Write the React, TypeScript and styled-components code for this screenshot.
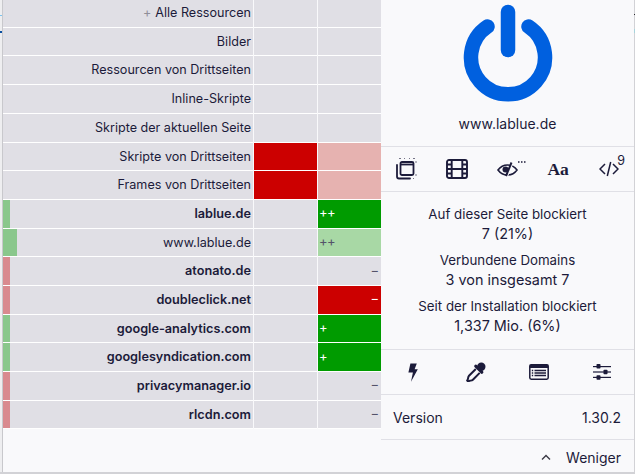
import React from 'react';
import styled, { createGlobalStyle } from 'styled-components';

const GlobalStyle = createGlobalStyle`
  html, body {
    margin: 0;
    padding: 0;
    background: #f9f9fb;
  }
  body {
    font-family: Inter, "Noto Sans", sans-serif;
    color: #1c1b3a;
  }
`;

type CellTone = 'none' | 'red' | 'paleRed' | 'green' | 'paleGreen';

interface IFirewallRow {
  label: string;
  bold?: boolean;
  prefix?: string;
  bar?: 'green' | 'red';
  barWidth?: number;
  global?: CellTone;
  local?: CellTone;
  mark?: string;
}

const rows: IFirewallRow[] = [
  { label: 'Alle Ressourcen', prefix: '+' },
  { label: 'Bilder' },
  { label: 'Ressourcen von Drittseiten' },
  { label: 'Inline-Skripte' },
  { label: 'Skripte der aktuellen Seite' },
  { label: 'Skripte von Drittseiten', global: 'red', local: 'paleRed' },
  { label: 'Frames von Drittseiten', global: 'red', local: 'paleRed' },
  { label: 'lablue.de', bold: true, bar: 'green', barWidth: 7, local: 'green', mark: '++' },
  { label: 'www.lablue.de', bar: 'green', barWidth: 14, local: 'paleGreen', mark: '++' },
  { label: 'atonato.de', bold: true, bar: 'red', barWidth: 7, mark: '−' },
  { label: 'doubleclick.net', bold: true, bar: 'red', barWidth: 7, local: 'red', mark: '−' },
  { label: 'google-analytics.com', bold: true, bar: 'green', barWidth: 7, local: 'green', mark: '+' },
  { label: 'googlesyndication.com', bold: true, bar: 'green', barWidth: 7, local: 'green', mark: '+' },
  { label: 'privacymanager.io', bold: true, bar: 'red', barWidth: 7, mark: '−' },
  { label: 'rlcdn.com', bold: true, bar: 'red', barWidth: 7, mark: '−' },
];

const toneColors: Record<CellTone, string> = {
  none: '#e0dfe5',
  red: '#cc0000',
  paleRed: '#e6b2b0',
  green: '#009b00',
  paleGreen: '#a8d8a5',
};

const barColors = { green: '#8ac78c', red: '#d98a8f' };

const PopupIcon = () => (
  <svg width="22" height="22" viewBox="0 0 22 22" fill="none" stroke="currentColor">
    <path d="M2 7v11.500a2 2 0 0 0 2 2h11" strokeWidth="1.800" strokeLinecap="round" />
    <rect x="5.500" y="4" width="13" height="13" rx="1.500" strokeWidth="1.800" />
    <path d="M5.500 6.500h13" strokeWidth="1.800" />
    <path d="M4 .5h2M9 .5h1M14 .5h1M18 .5h2M21 3v2M21 16v2M18 20.500h1" strokeWidth="1" opacity=".6" />
  </svg>
);

const FilmIcon = () => (
  <svg width="22" height="20" viewBox="0 0 22 20" fill="none" stroke="currentColor" strokeWidth="1.900">
    <rect x="1" y="1" width="20" height="18" rx="2" />
    <path d="M5.700 1v18M16.300 1v18M5.700 10h10.600M1 5.500h4.700M1 10h4.700M1 14.500h4.700M16.300 5.500H21M16.300 10H21M16.300 14.500H21" />
  </svg>
);

const EyeIcon = () => (
  <EyeSvg width="21" height="16" viewBox="0 0 21 16" fill="none" stroke="currentColor">
    <path d="M1 9c2.500-3.400 5.600-5 9.500-5s7 1.600 9.500 5c-2.500 3.400-5.600 5-9.500 5S3.500 12.400 1 9z" strokeWidth="1.600" />
    <circle cx="8.500" cy="8.500" r="3" fill="currentColor" stroke="none" />
    <path d="M16 1.500L10.500 15" stroke="#f9f9fb" strokeWidth="1.300" />
    <path d="M14.500 1.500L9 15" strokeWidth="2" />
    <path d="M21 1h1.500M24 1h1.500M27 1h1.500" strokeWidth="1.500" />
  </EyeSvg>
);

const BoltIcon = () => (
  <svg width="10" height="19" viewBox="0 0 10 19" fill="currentColor">
    <path d="M2.400 .5h6.400L6.600 6.200h3.200L3 18.700l1.900-9.300H.4z" />
  </svg>
);

const DropperIcon = () => (
  <svg width="20" height="20" viewBox="0 0 20 20" fill="none" stroke="currentColor">
    <circle cx="15.300" cy="4.700" r="4.200" fill="currentColor" stroke="none" />
    <path d="M9.800 4.200l6 6" strokeWidth="3.200" strokeLinecap="round" />
    <path d="M9.800 7L3 13.800c-.8.800-.8 1.700-1 3l-.8 1.800.9.900 1.800-.8c1.300-.2 2.200-.2 3-1l6.800-6.800" strokeWidth="2" />
  </svg>
);

const ListIcon = () => (
  <svg width="20" height="16" viewBox="0 0 20 16" fill="none">
    <rect x=".8" y=".8" width="18.400" height="14.400" rx="1.400" stroke="currentColor" strokeWidth="1.500" />
    <rect x=".8" y=".8" width="18.400" height="3.200" fill="currentColor" />
    <path d="M2.800 6.500h1.400M2.800 9h1.400M2.800 11.500h1.400M5.500 6.500h11.500M5.500 9h11.500M5.500 11.500h11.500" stroke="currentColor" strokeWidth="1.300" />
  </svg>
);

const SlidersIcon = () => (
  <svg width="18" height="16" viewBox="0 0 18 16" fill="currentColor">
    <rect x="0" y="2" width="18" height="1.200" />
    <rect x="0" y="7.400" width="18" height="1.200" />
    <rect x="0" y="12.800" width="18" height="1.200" />
    <rect x="3.500" y="0" width="4" height="4.500" rx=".8" />
    <rect x="10.500" y="5.700" width="4" height="4.500" rx=".8" />
    <rect x="3.500" y="11.300" width="4" height="4.500" rx=".8" />
  </svg>
);

const CodeIcon = () => (
  <svg width="20" height="16" viewBox="0 0 20 16" fill="none" stroke="currentColor" strokeWidth="1.500">
    <path d="M6 3L1 8l5 5M14 3l5 5-5 5M11.700 1L8.300 15" />
  </svg>
);

const App: React.FC = () => (
  <>
    <GlobalStyle />
    <Window>
      <LeftEdge />
      <Firewall>
        {rows.map(row => (
          <Row key={row.label}>
            <LabelCell $bold={row.bold}>
              {row.bar && <HitBar $color={barColors[row.bar]} $width={row.barWidth ?? 7} />}
              {row.prefix && <Prefix>{row.prefix}</Prefix>}
              {row.label}
            </LabelCell>
            <RuleCell $tone={row.global ?? 'none'} />
            <RuleCell $tone={row.local ?? 'none'}>
              {row.mark && (
                <CellMark $tone={row.local ?? 'none'} $minus={row.mark === '−'}>
                  {row.mark}
                </CellMark>
              )}
            </RuleCell>
          </Row>
        ))}
      </Firewall>
      <Panel>
        <PowerButton>
          <svg width="100" height="104" viewBox="0 0 100 104" fill="none" stroke="#0060df" strokeWidth="14.500" strokeLinecap="round">
            <path d="M29.500 26.500a37 37 0 1 0 41 0" />
            <path d="M50 12v38" />
          </svg>
        </PowerButton>
        <Hostname>www.lablue.de</Hostname>
        <ToolRow $columns={5}>
          <ToolCell><PopupIcon /></ToolCell>
          <ToolCell><FilmIcon /></ToolCell>
          <ToolCell><EyeIcon /></ToolCell>
          <ToolCell><FontGlyph>Aa</FontGlyph></ToolCell>
          <ToolCell><CodeIcon /><Badge>9</Badge></ToolCell>
        </ToolRow>
        <Stats>
          <StatLabel>Auf dieser Seite blockiert</StatLabel>
          <StatValue>7 (21%)</StatValue>
          <StatLabel>Verbundene Domains</StatLabel>
          <StatValue>3 von insgesamt 7</StatValue>
          <StatLabel>Seit der Installation blockiert</StatLabel>
          <StatValue>1,337 Mio. (6%)</StatValue>
        </Stats>
        <ToolRow $columns={4}>
          <ToolCell><BoltIcon /></ToolCell>
          <ToolCell><DropperIcon /></ToolCell>
          <ToolCell><ListIcon /></ToolCell>
          <ToolCell><SlidersIcon /></ToolCell>
        </ToolRow>
        <VersionRow>
          <span>Version</span>
          <span>1.30.2</span>
        </VersionRow>
        <MoreRow>
          <svg width="10" height="6" viewBox="0 0 10 6" fill="none" stroke="#3a3944" strokeWidth="1.400">
            <path d="M1 5.500l4-4 4 4" />
          </svg>
          <span>Weniger</span>
        </MoreRow>
      </Panel>
      <RightEdge />
    </Window>
  </>
);

export default App;

const Window = styled.div`
  width: 635px;
  height: 474px;
  box-sizing: border-box;
  display: flex;
  overflow: hidden;
  background: #f9f9fb;
  border-bottom: 2px solid #d2d2d6;
`;

const LeftEdge = styled.div`
  width: 3px;
  box-sizing: border-box;
  flex: none;
  border-right: 1px solid #c8c8cc;
  background: linear-gradient(
    #eeeef0 15px,
    #7cc4ef 15px,
    #7cc4ef 16px,
    #eeeef0 16px,
    #eeeef0 31px,
    #0a4ea0 31px,
    #0a4ea0 33px,
    #eeeef0 33px
  );
`;

const RightEdge = styled.div`
  width: 1px;
  flex: none;
  background: linear-gradient(
    #d2d2d6 14px,
    #2a2a2e 14px,
    #2a2a2e 15px,
    #d2d2d6 15px,
    #d2d2d6 29px,
    #a8d4dc 29px,
    #a8d4dc 33px,
    #d2d2d6 33px
  );
`;

const Firewall = styled.div`
  width: 378px;
  flex: none;
  display: flex;
  flex-direction: column;
  margin-top: -0.900px;
`;

const Row = styled.div`
  display: flex;
  height: 28.700px;
  flex: none;
`;

const LabelCell = styled.div<{ $bold?: boolean }>`
  position: relative;
  width: 250px;
  flex: none;
  box-sizing: border-box;
  padding-right: 2px;
  background: #e0dfe5;
  border-bottom: 1px solid #fff;
  font-size: ${({ $bold }) => ($bold ? '12.700px' : '12.600px')};
  font-weight: ${({ $bold }) => ($bold ? 600 : 400)};
  line-height: 27px;
  text-align: right;
  white-space: nowrap;
`;

const HitBar = styled.span<{ $color: string; $width: number }>`
  position: absolute;
  left: 0;
  top: 0;
  bottom: 0;
  width: ${({ $width }) => $width}px;
  background: ${({ $color }) => $color};
`;

const Prefix = styled.span`
  margin-right: 4px;
  color: #8f8e98;
`;

const RuleCell = styled.div<{ $tone: CellTone }>`
  flex: 1;
  display: flex;
  align-items: center;
  box-sizing: border-box;
  margin-left: 1px;
  background: ${({ $tone }) => toneColors[$tone]};
  border-bottom: 1px solid #fff;
`;

const CellMark = styled.span<{ $tone: CellTone; $minus: boolean }>`
  flex: 1;
  padding: 0 ${({ $minus }) => ($minus ? '2px' : '1px')} 3px 1px;
  font-size: 13px;
  letter-spacing: ${({ $minus }) => ($minus ? '0' : '-0.600px')};
  text-align: ${({ $minus }) => ($minus ? 'right' : 'left')};
  color: ${({ $tone }) => ($tone === 'red' || $tone === 'green' ? '#fff' : '#54536a')};
`;

const Panel = styled.div`
  flex: 1;
  display: flex;
  flex-direction: column;
  min-width: 0;
  font-size: 13px;
`;

const PowerButton = styled.div`
  height: 104px;
  display: flex;
  justify-content: center;
`;

const Hostname = styled.div`
  height: 42px;
  line-height: 40px;
  font-size: 14px;
  font-weight: 400;
  text-align: center;
`;

const ToolRow = styled.div<{ $columns: number }>`
  height: 45px;
  box-sizing: border-box;
  display: grid;
  grid-template-columns: repeat(${({ $columns }) => $columns}, 1fr);
  border-top: 1px solid #e0e0e6;
`;

const ToolCell = styled.div`
  position: relative;
  display: flex;
  align-items: center;
  justify-content: center;
`;

const EyeSvg = styled.svg`
  overflow: visible;
`;

const FontGlyph = styled.span`
  font-family: "Liberation Serif", serif;
  font-size: 17.500px;
  font-weight: 700;
`;

const Badge = styled.span`
  position: absolute;
  top: 8px;
  right: 9px;
  font-size: 12.500px;
  line-height: 12px;
`;

const Stats = styled.div`
  height: 158px;
  box-sizing: border-box;
  padding-top: 13px;
  border-top: 1px solid #e0e0e6;
  text-align: center;
`;

const StatLabel = styled.div`
  height: 19px;
  line-height: 19px;
  font-size: 13.300px;
  white-space: nowrap;
`;

const StatValue = styled.div`
  height: 27px;
  line-height: 19px;
  font-size: 14.400px;
`;

const VersionRow = styled.div`
  height: 45px;
  box-sizing: border-box;
  display: flex;
  align-items: center;
  justify-content: space-between;
  padding: 0 13px 0 12px;
  border-top: 1px solid #e0e0e6;
  font-size: 14px;
`;

const MoreRow = styled.div`
  flex: 1;
  display: flex;
  align-items: center;
  justify-content: flex-end;
  gap: 15px;
  padding: 2px 13px 0 0;
  border-top: 1px solid #e0e0e6;
  font-size: 14px;
`;
